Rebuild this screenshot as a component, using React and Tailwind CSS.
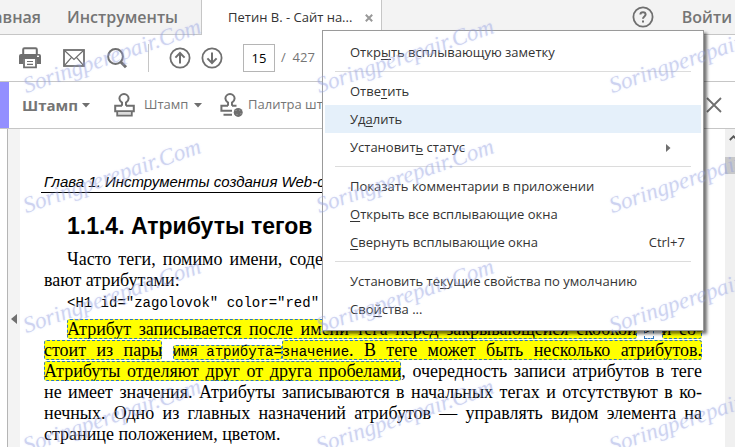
const MENU = [
  [{ before: "Откр", key: "ы", after: "ть всплывающую заметку" }],
  [
    { before: "Отве", key: "т", after: "ить" },
    { before: "Уд", key: "а", after: "лить", active: true },
    { before: "Установит", key: "ь", after: " статус", submenu: true },
  ],
  [
    { before: "Показать комментарии в приложении" },
    { key: "О", after: "ткрыть все всплывающие окна" },
    { key: "С", after: "вернуть всплывающие окна", shortcut: "Ctrl+7" },
  ],
  [
    { before: "Установить те", key: "к", after: "ущие свойства по умолчанию" },
    { before: "Сво", key: "й", after: "ства ..." },
  ],
];

function PrintIcon() {
  return (
    <svg width="22" height="22" viewBox="0 0 22 22" fill="none">
      <path d="M4.2 7V2.4q0-1.2 1.2-1.2h11.2q1.2 0 1.2 1.2V7" stroke="#6f6f6f" strokeWidth="2" />
      <path d="M2 7h18a2 2 0 0 1 2 2v8h-4v-5H4v5H0V9a2 2 0 0 1 2-2z" fill="#6f6f6f" />
      <rect x="18" y="8.6" width="2" height="1.4" fill="#fff" />
      <path d="M5 12v8.4h12V12" stroke="#6f6f6f" strokeWidth="1.8" />
      <path d="M8 14.5h6M8 17.3h6" stroke="#6f6f6f" strokeWidth="1.2" />
    </svg>
  );
}

function MailIcon() {
  return (
    <svg width="22" height="18" viewBox="0 0 22 18" fill="none" stroke="#6f6f6f">
      <rect x="1" y="1" width="20" height="16" strokeWidth="1.8" />
      <path d="M1.5 1.5 11 10.5l9.5-9M1.5 16.5 8.5 8.3M20.5 16.5l-7-8.2" strokeWidth="1.2" />
    </svg>
  );
}

function SearchIcon() {
  return (
    <svg width="21" height="22" viewBox="0 0 21 22" fill="none" stroke="#6f6f6f">
      <circle cx="8.5" cy="9.5" r="7.4" strokeWidth="2" />
      <path d="m13.6 14.8 5.4 5.4" strokeWidth="3" />
    </svg>
  );
}

function ArrowIcon({ down }) {
  return (
    <svg width="22" height="22" viewBox="0 0 22 22" fill="none" stroke="#6f6f6f" strokeWidth="2">
      <circle cx="11" cy="11" r="9.6" strokeWidth="1.8" />
      <path d={down ? "M11 5.5v10M6.4 11.4 11 16l4.6-4.6" : "M11 16.5v-10M6.4 10.6 11 6l4.6 4.6"} />
    </svg>
  );
}

function StampIcon({ palette }) {
  return (
    <svg width="24" height="24" viewBox="0 0 24 24" fill="none" stroke="#6f6f6f" strokeWidth="2">
      <path d="M8 12.8V9.6C6.2 8.4 5.4 7 5.4 5.6a4.6 4.6 0 0 1 9.2 0c0 1.4-.8 2.8-2.6 4v3.2" />
      {palette ? (
        <>
          <path d="M8 12.8H1.4v5H12M12 12.8h4.5M3.5 21.8H12" />
          <circle cx="18.2" cy="19.4" r="4.5" fill="#6f6f6f" stroke="none" />
          <path d="M15.5 17.5h1M19.2 17.2h1M16.5 21.4h1M20.4 20.8h1" stroke="#aaa" strokeWidth="1" />
        </>
      ) : (
        <>
          <path d="M8 12.8H1.2v5.4h18.6v-5.4H12" />
          <path d="M3.2 19v3.6h14.6V19" fill="#dcdcdc" strokeWidth="1.8" />
        </>
      )}
    </svg>
  );
}

function Caret() {
  return (
    <svg width="8" height="5" viewBox="0 0 8 5" fill="#6f6f6f">
      <path d="M0 0h8L4 4.5z" />
    </svg>
  );
}

function TabBar() {
  return (
    <header className="flex h-[35px] shrink-0 border-b border-[#c6c6c6] bg-[#f3f3f3] text-base font-semibold text-[#757575]">
      <nav className="flex items-center">
        <a href="#home" className="flex w-[41px] justify-end overflow-hidden">
          Главная
        </a>
        <a href="#tools" className="ml-[26px] w-[134px]">
          Инструменты
        </a>
      </nav>
      <div className="-mb-px flex w-[181px] items-center justify-between border-x border-[#c6c6c6] bg-white pr-2 pl-[26px] text-[13px] font-normal text-[#333]">
        <span className="whitespace-nowrap">Петин В. - Сайт на...</span>
        <button aria-label="Закрыть вкладку">
          <svg width="8" height="8" viewBox="0 0 8 8" stroke="#999" strokeWidth="2">
            <path d="m.8.8 6.4 6.4M7.2.8.8 7.2" />
          </svg>
        </button>
      </div>
      <div className="ml-auto flex items-center gap-7 pr-[3px]">
        <button aria-label="Справка">
          <svg width="22" height="22" viewBox="0 0 22 22" fill="none" stroke="#6f6f6f" strokeWidth="2">
            <circle cx="11" cy="11" r="9.6" strokeWidth="1.8" />
            <path d="M8.4 8.6c0-3.2 5.2-3.2 5.2 0 0 1.9-2.6 1.9-2.6 4.2M11 14.4v2" />
          </svg>
        </button>
        <a href="#login">Войти</a>
      </div>
    </header>
  );
}

function Toolbar() {
  return (
    <div className="flex h-[47px] shrink-0 items-center border-b border-[#c6c6c6] pl-[19px] text-[13px] text-[#757575]">
      <div className="flex items-center gap-[22px]">
        <button aria-label="Печать"><PrintIcon /></button>
        <button aria-label="Почта"><MailIcon /></button>
        <button aria-label="Поиск"><SearchIcon /></button>
      </div>
      <div className="mx-5 h-7 w-px bg-[#c6c6c6]" />
      <div className="flex items-center gap-[10px]">
        <button aria-label="Предыдущая страница"><ArrowIcon /></button>
        <button aria-label="Следующая страница"><ArrowIcon down /></button>
      </div>
      <input
        aria-label="Номер страницы"
        defaultValue="15"
        className="ml-5 h-7 w-8 border border-[#b5b5b5] text-center text-[13px] text-black"
      />
      <span className="ml-[6px] whitespace-pre">/  427</span>
    </div>
  );
}

function StampBar() {
  return (
    <div className="flex h-[47px] shrink-0 items-center border-b border-[#c6c6c6] text-[13px] text-[#757575]">
      <div className="h-full w-[9px] bg-[#938fff]" />
      <button className="ml-[13px] flex w-[92px] items-center gap-1 text-[15px] font-bold">
        Штамп <Caret />
      </button>
      <button className="flex w-[106px] items-center gap-[6px]">
        <StampIcon />
        Штамп
        <Caret />
      </button>
      <button className="flex items-center gap-1 whitespace-nowrap">
        <StampIcon palette />
        Палитра штампов
      </button>
      <button aria-label="Закрыть панель" className="mr-[13px] ml-auto">
        <svg width="16" height="16" viewBox="0 0 16 16" stroke="#6f6f6f" strokeWidth="1.8">
          <path d="m1 1 14 14M15 1 1 15" />
        </svg>
      </button>
    </div>
  );
}

function Mark({ children, plain, code }) {
  return (
    <span
      className={`outline-1 -outline-offset-1 outline-dashed outline-[#2a75c0] ${
        plain ? "" : "rounded-[3px] bg-[#ffff00]"
      } ${code ? "inline-block font-['Liberation_Mono',monospace] text-[14px] leading-[15px]" : ""}`}
    >
      {children}
    </span>
  );
}

function Line({ children, className = "" }) {
  return (
    <span className={`block text-justify whitespace-nowrap [text-align-last:justify] ${className}`}>
      {children}
    </span>
  );
}

function Page() {
  return (
    <article className="min-w-0 flex-1 overflow-hidden pt-[44px] pr-[23px] pl-[21px] font-['Liberation_Serif',serif] text-lg leading-[21px] text-black">
      <p className="border-b border-black pb-px pl-[3px] font-['Liberation_Sans',sans-serif] text-[15px] leading-[18px] whitespace-nowrap italic">
        Глава 1. Инструменты создания Web-с
      </p>
      <h1 className="mt-[18px] pl-[26px] font-['Liberation_Sans',sans-serif] text-[23px] leading-[30px] font-bold">
        1.1.4. Атрибуты тегов
      </h1>
      <div className="pl-[3px]">
        <p className="mt-2">
          <Line className="ml-[23px] w-[256px]">Часто теги, помимо имени, соде</Line>
          вают атрибутами:
        </p>
        <p className="mt-[2px] pl-[23px] font-['Liberation_Mono',monospace] text-[14px] whitespace-nowrap">
          {'<H1 id="zagolovok" color="red"'}
        </p>
        <p className="mt-[5px]">
          <Line className="pl-[23px]">
            <Mark>Атрибут записывается после имени тега перед закрывающейся скобкой</Mark>{" "}
            <Mark plain>&gt;</Mark> <Mark>и со-</Mark>
          </Line>
          <Line>
            <Mark>стоит из пары</Mark> <Mark code>имя атрибута=</Mark>
            <Mark>
              <span className="font-['Liberation_Mono',monospace] text-[14px] leading-none">значение</span>.
              В теге может быть несколько атрибутов.
            </Mark>
          </Line>
          <Line>
            <Mark>Атрибуты отделяют друг от друга пробелами</Mark>, очередность записи атрибутов в теге
          </Line>
          <Line>не имеет значения. Атрибуты записываются в начальных тегах и отсутствуют в ко-</Line>
          <Line>нечных. Одно из главных назначений атрибутов — управлять видом элемента на</Line>
          странице положением, цветом.
        </p>
      </div>
    </article>
  );
}

function ContextMenu() {
  return (
    <div
      role="menu"
      className="absolute top-[30px] left-[322px] w-[382px] border border-[#9a9a9a] bg-white px-[2px] py-[7px] text-[13px] text-[#333] shadow-[3px_3px_3px_rgba(0,0,0,0.55)]"
    >
      {MENU.map((group, i) => (
        <div key={i}>
          {i > 0 && <hr className="mx-[10px] my-[5px] border-[#dcdcdc]" />}
          {group.map((item, j) => (
            <button
              key={j}
              role="menuitem"
              className={`flex h-7 w-full items-center justify-between pt-[2px] pr-4 pl-[25px] whitespace-nowrap ${
                item.active ? "bg-[#e5f0fa]" : ""
              }`}
            >
              <span>
                {item.before}
                {item.key && <u className="underline-offset-2">{item.key}</u>}
                {item.after}
              </span>
              {item.shortcut && <span>{item.shortcut}</span>}
              {item.submenu && (
                <svg className="mr-[14px]" width="5" height="8" viewBox="0 0 5 8" fill="#6f6f6f">
                  <path d="M0 0v8l4.5-4z" />
                </svg>
              )}
            </button>
          ))}
        </div>
      ))}
    </div>
  );
}

function Watermark() {
  return (
    <div
      aria-hidden="true"
      className="pointer-events-none absolute top-[-22px] left-[28px] grid auto-rows-[120px] grid-cols-[repeat(3,293px)] font-['Liberation_Serif',serif] text-[23px] leading-6 text-[#7f88cc]/30 italic [text-shadow:0_0_2px_rgba(190,205,255,0.4)]"
    >
      {Array.from({ length: 15 }, (_, i) => (
        <span key={i} className="origin-bottom-left -rotate-[19deg] self-end whitespace-nowrap">
          Soringperepair.Com
        </span>
      ))}
    </div>
  );
}

export default function App() {
  return (
    <div className="relative flex h-screen flex-col overflow-hidden bg-white font-['Open_Sans','Noto_Sans',sans-serif]">
      <TabBar />
      <Toolbar />
      <StampBar />
      <main className="flex min-h-0 flex-1">
        <button
          aria-label="Показать панель"
          className="ml-[7px] flex w-[13px] shrink-0 justify-center border-l border-[#b5b5b5] bg-[#f3f3f3] pt-[185px]"
        >
          <svg width="6" height="10" viewBox="0 0 6 10" fill="#6f6f6f">
            <path d="M6 0v10L0 5z" />
          </svg>
        </button>
        <Page />
        <div className="w-[10px] shrink-0 overflow-hidden bg-[#f0f0f0]">
          <div className="flex h-7 w-[17px] justify-center pt-[6px]">
            <svg width="9" height="6" viewBox="0 0 9 6" fill="none" stroke="#555" strokeWidth="1.8">
              <path d="m.8 5 3.7-3.7L8.2 5" />
            </svg>
          </div>
          <div className="h-[17px] bg-[#c8c8c8]" />
        </div>
      </main>
      <ContextMenu />
      <Watermark />
    </div>
  );
}
